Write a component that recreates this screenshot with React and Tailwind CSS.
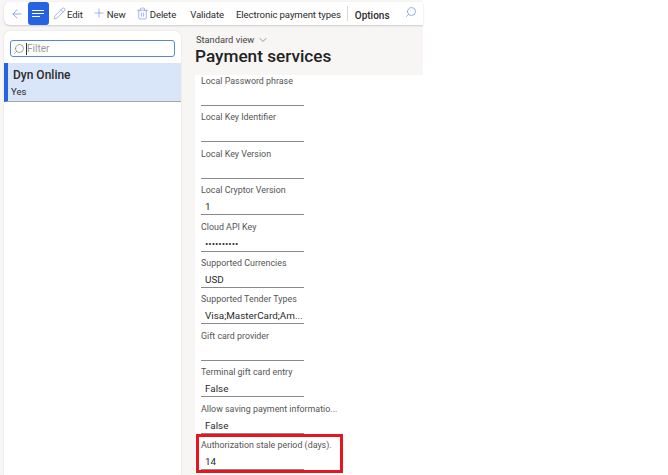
import { ArrowLeft, Pencil, Plus, Search, Trash2, ChevronDown } from 'lucide-react';

const fields = [
  ['Local Password phrase', ''],
  ['Local Key Identifier', ''],
  ['Local Key Version', ''],
  ['Local Cryptor Version', '1'],
  ['Cloud API Key', '••••••••••'],
  ['Supported Currencies', 'USD'],
  ['Supported Tender Types', 'Visa;MasterCard;Am...'],
  ['Gift card provider', ''],
  ['Terminal gift card entry', 'False'],
  ['Allow saving payment informatio...', 'False'],
  ['Authorization stale period (days).', '14'],
];

function ToolButton({ icon, label, className = '' }) {
  return (
    <div className={`flex items-center gap-px shrink-0 ${className}`}>
      {icon}
      <span className="mt-[3px] text-[9.6px] tracking-[-0.1px] text-[#2b2b2b]">{label}</span>
    </div>
  );
}

function Field({ label, value }) {
  return (
    <div className="h-[36.4px] w-[103px] shrink-0">
      <div className="h-[13px] text-[8.9px] leading-[13px] text-[#555] whitespace-nowrap">{label}</div>
      <div className="h-[18px] border-b border-[#8a8a8a] pl-1 pt-[2px] text-[9.9px] leading-[16px] text-[#2b2b2b] whitespace-nowrap">
        {value}
      </div>
    </div>
  );
}

export default function App() {
  return (
    <div className="relative w-[668px] h-[475px] overflow-hidden bg-white flex font-['Roboto','Noto_Sans',sans-serif]">
      <div className="w-[423px] h-full bg-[#f7f6f5] flex flex-col">
        <div className="h-[23px] mt-[2px] ml-[4px] bg-white rounded-l-md shadow-[0_1px_2px_rgba(0,0,0,0.18)] flex items-center shrink-0">
          <ArrowLeft className="shrink-0 ml-[6px] w-[14px] h-[14px] text-[#6f8fe0]" strokeWidth={1.3} />
          <div className="shrink-0 ml-[4px] w-[21px] h-[23px] rounded-[3px] bg-[#2563e0] flex flex-col justify-center gap-[1.5px] pl-[4px]">
            <span className="block w-[12px] h-[1.3px] bg-white" />
            <span className="block w-[12px] h-[1.3px] bg-white" />
            <span className="block w-[8px] h-[1.3px] bg-white" />
          </div>
          <ToolButton className="ml-[4px]" label="Edit" icon={<Pencil className="shrink-0 w-[13px] h-[13px] text-[#6f8fe0]" strokeWidth={1.2} />} />
          <ToolButton className="ml-[9px]" label="New" icon={<Plus className="shrink-0 w-[14px] h-[14px] text-[#6f8fe0]" strokeWidth={1.1} />} />
          <ToolButton className="ml-[10px]" label="Delete" icon={<Trash2 className="shrink-0 w-[13px] h-[13px] text-[#6f8fe0]" strokeWidth={1.2} />} />
          <span className="shrink-0 ml-[14px] mt-[3px] text-[9.6px] tracking-[-0.1px] text-[#2b2b2b]">Validate</span>
          <span className="shrink-0 ml-[12px] mt-[3px] text-[9.6px] tracking-[-0.1px] text-[#2b2b2b] whitespace-nowrap">Electronic payment types</span>
          <span className="shrink-0 ml-[6px] w-px h-[15px] bg-[#d8d8d8]" />
          <span className="shrink-0 ml-[7px] mt-[3px] text-[10px] font-medium text-[#2b2b2b]">Options</span>
          <Search className="shrink-0 ml-[15px] mb-[3px] w-[12px] h-[12px] text-[#6f8fe0] -scale-x-100" strokeWidth={1.4} />
        </div>
        <div className="flex flex-1 mt-[6px] min-h-0">
          <div className="w-[177px] ml-[4px] bg-white rounded-t-md shadow-[0_0_2px_rgba(0,0,0,0.12)] shrink-0">
            <div className="mx-[6px] mt-[9px] h-[17px] rounded-[3px] border border-[#5a86d8] flex items-center pl-[2px]">
              <Search className="shrink-0 w-[12px] h-[12px] text-[#777] -scale-x-100" strokeWidth={1.3} />
              <span className="ml-[1px] w-px h-[12px] bg-[#333]" />
              <span className="text-[10px] text-[#999]">Filter</span>
            </div>
            <div className="mt-[6px] h-[39px] bg-[#d9e5f9] border-l-[4px] border-l-[#2563e0] border-b border-b-[#a8a8a8] pl-[3px]">
              <div className="pl-[2px] pt-[4px] text-[12px] leading-[16px] font-medium text-[#2b2b2b]">Dyn Online</div>
              <div className="pt-[2px] text-[9.5px] leading-[14px] text-[#2b2b2b]">Yes</div>
            </div>
          </div>
          <div className="flex-1 min-w-0 ml-[14px] flex flex-col">
            <div className="h-[44px] shrink-0">
              <div className="flex items-center gap-[3px] text-[9.3px] leading-[14px] text-[#444] pt-[2px] pl-px">
                Standard view <ChevronDown className="shrink-0 w-[12px] h-[12px]" strokeWidth={1.1} />
              </div>
              <div className="-mt-[3px] text-[17.2px] leading-[24px] font-medium text-[#222] whitespace-nowrap">Payment services</div>
            </div>
            <div className="flex-1 bg-white pl-[6px]">
              {fields.map(([label, value]) => (
                <Field key={label} label={label} value={value} />
              ))}
            </div>
          </div>
        </div>
      </div>
      <div className="absolute left-[196px] top-[434px] w-[147px] h-[39px] border-[3px] border-[#e8141f]" />
    </div>
  );
}
